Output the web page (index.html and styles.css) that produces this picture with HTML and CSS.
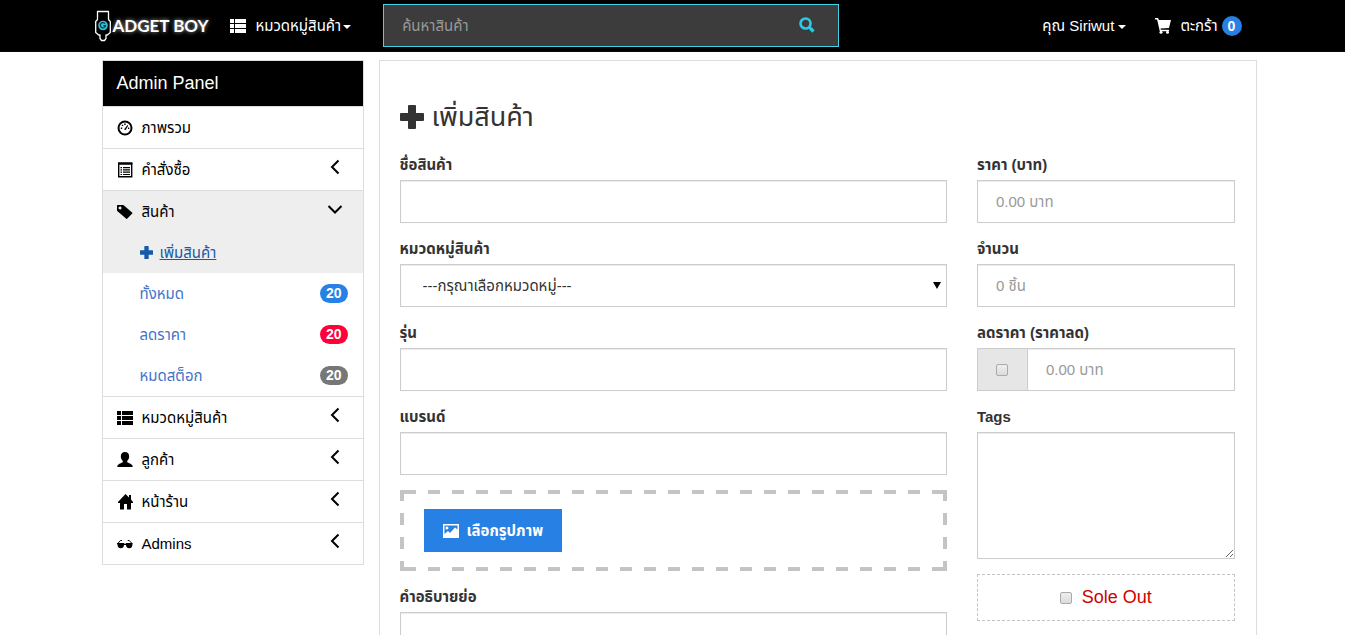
FILE: index.html
```html
<!DOCTYPE html>
<html lang="th">
<head>
<meta charset="utf-8">
<meta name="viewport" content="width=device-width, initial-scale=1">
<title>เพิ่มสินค้า - Gadget Boy</title>
<link rel="stylesheet" href="styles.css">
</head>
<body>
<svg class="sprite" aria-hidden="true">
  <symbol id="list" viewBox="0 0 16 14"><path d="M0 0h4v4H0zM5 0h11v4H5zM0 5h4v4H0zM5 5h11v4H5zM0 10h4v4H0zM5 10h11v4H5z"/></symbol>
  <symbol id="plus" viewBox="0 0 24 24"><path d="M9 0h6q1 0 1 1v7h7q1 0 1 1v6q0 1-1 1h-7v7q0 1-1 1H9q-1 0-1-1v-7H1q-1 0-1-1V9q0-1 1-1h7V1q0-1 1-1z"/></symbol>
  <symbol id="left" viewBox="0 0 16 16"><path d="M11.500 1.500L5 8l6.500 6.500" fill="none" stroke="currentColor" stroke-width="2"/></symbol>
  <symbol id="down" viewBox="0 0 16 16"><path d="M1.500 5L8 11.500 14.500 5" fill="none" stroke="currentColor" stroke-width="2"/></symbol>
</svg>

<header class="navbar">
  <div class="container navbar-inner">
    <a class="brand" href="#" aria-label="Gadget Boy">
      <svg class="brand-mark" viewBox="0 0 18 32" aria-hidden="true">
        <path d="M3.500 1.500h11v8l1.800 2v11l-3 2.500h-1.300v3.500l-1.500 2h-3l-1.500-2V25H4.700l-3-2.500v-11l1.800-2z" fill="#000" stroke="#fff" stroke-width="1.300" stroke-linejoin="round"/>
        <circle cx="9" cy="15.500" r="4.800" fill="#2fc0d8"/>
        <path d="M11 13.700a2.600 2.600 0 1 0 .5 2H9.300" fill="none" stroke="#0b3a44" stroke-width="1.200"/>
      </svg>
      <span class="brand-text">ADGET BOY</span>
    </a>
    <button class="nav-item nav-category" type="button">
      <svg class="icon-list"><use href="#list"/></svg>
      <span>หมวดหมู่สินค้า<i class="caret"></i></span>
    </button>
    <form class="search">
      <input class="search-input" type="text" placeholder="ค้นหาสินค้า" aria-label="ค้นหาสินค้า">
      <button class="search-button" type="button" aria-label="ค้นหา">
        <svg class="icon" viewBox="0 0 16 16"><circle cx="6.500" cy="6.500" r="5" fill="none" stroke="currentColor" stroke-width="2.600"/><path d="M10.200 10.200l4.300 4.300" fill="none" stroke="currentColor" stroke-width="3.200"/></svg>
      </button>
    </form>
    <button class="nav-item nav-user" type="button"><span>คุณ Siriwut <i class="caret"></i></span></button>
    <a class="nav-item" href="#">
      <svg class="icon" viewBox="0 0 16 16"><path d="M0 0h3l1 2h12l-2 8-8.500.5.400 1.200H14v1.500H4.800L2.100 1.500H0z"/><circle cx="6" cy="14.300" r="1.500"/><circle cx="12.500" cy="14.300" r="1.500"/></svg>
      <span>ตะกร้า</span>
      <span class="badge badge-cart">0</span>
    </a>
  </div>
</header>

<div class="container layout">
  <nav class="sidebar" aria-label="Admin Panel">
    <div class="sidebar-title">Admin Panel</div>
    <a class="side-link" href="#">
      <svg class="icon" viewBox="0 0 16 16"><circle cx="8" cy="8" r="6.500" fill="none" stroke="currentColor" stroke-width="2"/><path d="M7 9.500L10.500 5l.8.600L8.700 10z"/><path d="M3.800 7.500h1.400v1.400H3.800zM4.800 4.800h1.400v1.300H4.800zM7.200 3.600h1.500V5H7.200zM11 7.500h1.300v1.400H11z"/></svg>
      <span>ภาพรวม</span>
    </a>
    <a class="side-link" href="#">
      <svg class="icon" viewBox="0 0 16 16"><path d="M1.700 1.200h13v13.600h-13z" fill="none" stroke="currentColor" stroke-width="1.400"/><path d="M1 0.500h14.400v2.300H1zM3.500 5H5v1.200H3.500zM6 5h7v1.200H6zM3.500 7.300H5v1.200H3.500zM6 7.300h7v1.200H6zM3.500 9.600H5v1.200H3.500zM6 9.600h7v1.200H6zM3.500 11.900H5v1.200H3.500zM6 11.900h7v1.200H6z"/></svg>
      <span>คำสั่งซื้อ</span>
      <svg class="icon chevron"><use href="#left"/></svg>
    </a>
    <a class="side-link active" href="#">
      <svg class="icon" viewBox="0 0 16 16"><path fill-rule="evenodd" d="M0 1.500Q0 1 .5 1H6q.6 0 1 .4l8.300 7.300q.4.400 0 .8l-5.200 5.200q-.4.400-.8 0L.5 7.200Q0 6.800 0 6.200zM3 2.500a1.500 1.500 0 1 0 .01 3A1.500 1.500 0 0 0 3 2.500z"/></svg>
      <span>สินค้า</span>
      <svg class="icon chevron"><use href="#down"/></svg>
    </a>
    <div class="submenu">
      <a class="sub-link current" href="#"><svg class="icon-plus-small"><use href="#plus"/></svg><span>เพิ่มสินค้า</span></a>
      <a class="sub-link" href="#"><span>ทั้งหมด</span><span class="badge badge-blue">20</span></a>
      <a class="sub-link" href="#"><span>ลดราคา</span><span class="badge badge-red">20</span></a>
      <a class="sub-link" href="#"><span>หมดสต็อก</span><span class="badge">20</span></a>
    </div>
    <a class="side-link" href="#">
      <svg class="icon-list"><use href="#list"/></svg>
      <span>หมวดหมู่สินค้า</span>
      <svg class="icon chevron"><use href="#left"/></svg>
    </a>
    <a class="side-link" href="#">
      <svg class="icon" viewBox="0 0 16 16"><path d="M8 0c2.700 0 4.200 1.700 4.200 4.300 0 1.900-.8 3.600-2 4.700v1.300c1.800 1 5.500 1.700 5.500 4.700H.3c0-3 3.700-3.700 5.500-4.700V9c-1.200-1.100-2-2.800-2-4.700C3.800 1.700 5.300 0 8 0z"/></svg>
      <span>ลูกค้า</span>
      <svg class="icon chevron"><use href="#left"/></svg>
    </a>
    <a class="side-link" href="#">
      <svg class="icon" viewBox="0 0 16 16"><path d="M8.500 0L12 3.500V1h2v4.500L16 8v1h-2v6.500h-4V10H7v5.500H3V9H1V8z"/></svg>
      <span>หน้าร้าน</span>
      <svg class="icon chevron"><use href="#left"/></svg>
    </a>
    <a class="side-link" href="#">
      <svg class="icon" viewBox="0 0 16 16"><path d="M0 7h6.500q.6 0 .9.700h1.200q.3-.7.900-.7H15.500v1q0 4.200-3.200 4.200-3 0-3.300-3.200H7q-.3 3.200-3.300 3.200Q.5 12.200.5 8.500L0 8z"/><path d="M.7 7.500L3.500 4.500H5M15 7.500l-2.800-3H10.700" fill="none" stroke="currentColor"/></svg>
      <span>Admins</span>
      <svg class="icon chevron"><use href="#left"/></svg>
    </a>
  </nav>

  <main class="panel">
    <h1 class="title"><svg class="icon-plus"><use href="#plus"/></svg><span>เพิ่มสินค้า</span></h1>
    <form class="form">
      <div class="column">
        <div class="field"><label for="name">ชื่อสินค้า</label><input class="control" id="name" type="text"></div>
        <div class="field">
          <label for="category">หมวดหมู่สินค้า</label>
          <div class="select-wrap">
            <select class="control" id="category"><option>---กรุณาเลือกหมวดหมู่---</option></select>
          </div>
        </div>
        <div class="field"><label for="model">รุ่น</label><input class="control" id="model" type="text"></div>
        <div class="field"><label for="brand">แบรนด์</label><input class="control" id="brand" type="text"></div>
        <div class="dropzone">
          <button class="upload" type="button">
            <svg class="icon" viewBox="0 0 16 16"><path fill-rule="evenodd" d="M0 1h16v14H0zM1.500 2.500V11L5 8l2 2 5-5.500 2.500 2V2.500zM4 3.500a1.500 1.500 0 1 1-.01 3A1.500 1.500 0 0 1 4 3.500z"/></svg>
            <span>เลือกรูปภาพ</span>
          </button>
        </div>
        <div class="field"><label for="summary">คำอธิบายย่อ</label><textarea class="control area" id="summary"></textarea></div>
      </div>
      <div class="column">
        <div class="field"><label for="price">ราคา (บาท)</label><input class="control" id="price" type="text" placeholder="0.00 บาท"></div>
        <div class="field"><label for="amount">จำนวน</label><input class="control" id="amount" type="text" placeholder="0 ชิ้น"></div>
        <div class="field">
          <label for="sale">ลดราคา (ราคาลด)</label>
          <div class="input-group">
            <span class="addon"><input class="check" type="checkbox" aria-label="ลดราคา"></span>
            <input class="control" id="sale" type="text" placeholder="0.00 บาท">
          </div>
        </div>
        <div class="field"><label for="tags">Tags</label><textarea class="control area" id="tags"></textarea></div>
        <label class="soldout"><input class="check" type="checkbox"><span>Sole Out</span></label>
      </div>
    </form>
  </main>
</div>
</body>
</html>
```
FILE: styles.css
```css
* { box-sizing: border-box; }

body {
  margin: 0;
  background: #fff;
  color: #333;
  font: 15px/21px "Liberation Sans", Arial, "Noto Sans Thai", sans-serif;
}

a { color: inherit; text-decoration: none; }

button, input, select, textarea { font: inherit; color: inherit; }

button { border: 0; padding: 0; background: none; cursor: pointer; }

.sprite { position: absolute; width: 0; height: 0; }

.icon, .icon-list { flex: none; width: 16px; height: 16px; fill: currentColor; }
.icon-list { height: 14px; }

.container { max-width: 1170px; margin: 0 auto; }

/* Top bar */
.navbar { border-bottom: 1px solid #080808; background: #000; color: #fff; }

.navbar-inner {
  display: flex;
  align-items: center;
  min-height: 51px;
  padding: 0 16px 0 6px;
}

.brand { display: flex; align-items: center; gap: 1px; margin-right: 22px; }
.brand-mark { width: 18px; height: 32px; }
.brand-text {
  font: bold 17px/32px Lato, sans-serif;
  text-shadow: 0 0 4px #aaa;
  white-space: nowrap;
}

.nav-item { display: flex; align-items: center; gap: 9px; white-space: nowrap; }
.nav-category { margin-right: 32px; }

.caret {
  display: inline-block;
  vertical-align: middle;
  border: 4px solid transparent;
  border-top-color: currentColor;
  border-bottom: 0;
}
.nav-category .caret { margin-left: 2px; }
.nav-user { margin: 0 29px 0 auto; }

.search {
  display: flex;
  flex: 0 1 456px;
  height: 43px;
  border: 1px solid #44d2e8;
  background: #3c3c3c;
}
.search-input {
  flex: 1;
  min-width: 0;
  padding: 0 18px;
  border: 0;
  outline: 0;
  background: none;
}
.search-button { padding: 0 23px; color: #2fc8e8; line-height: 1; }

::placeholder { color: #999; opacity: 1; }

.badge {
  min-width: 20px;
  padding: 0 6px;
  border-radius: 10px;
  background: #777;
  color: #fff;
  font: bold 14px/19px "Liberation Sans", Arial, sans-serif;
  text-align: center;
}
.badge-blue, .badge-cart { background: #2780e3; }
.badge-red { background: #ff0039; }
.badge-cart { margin-left: -5px; line-height: 20px; }

/* Page */
.layout { display: flex; align-items: flex-start; gap: 15px; padding: 8px 1px 20px 14px; }

.sidebar { flex: 0 0 262px; border: 1px solid #ddd; color: #000; }
.sidebar-title {
  padding: 12px 14px;
  background: #000;
  color: #fff;
  font-size: 18px;
}
.side-link {
  display: flex;
  align-items: center;
  gap: 9px;
  height: 42px;
  padding: 0 20px 0 14px;
  border-top: 1px solid #ddd;
}
.chevron { margin: 0 0 6px auto; }
.active, .current { background: #eee; }

.sub-link {
  display: flex;
  align-items: center;
  justify-content: space-between;
  height: 41px;
  padding: 0 15px 0 37px;
  color: #4374c9;
}
.current { justify-content: flex-start; gap: 7px; color: #165ba8; }
.current span { text-decoration: underline; }
.icon-plus-small { width: 13px; height: 13px; fill: currentColor; }

.panel { flex: 1; min-width: 0; padding: 40px 21px 20px 20px; border: 1px solid #ddd; }
.title {
  display: flex;
  align-items: center;
  gap: 8px;
  margin: 0 0 21px;
  font-size: 27px;
  font-weight: normal;
  line-height: 32px;
}
.icon-plus { width: 24px; height: 24px; fill: currentColor; }

.form { display: grid; grid-template-columns: 17fr 8fr; column-gap: 30px; }
.column { display: flex; flex-direction: column; gap: 15px; min-width: 0; }
.field { display: flex; flex-direction: column; gap: 5px; }
.field label { height: 21px; font-weight: bold; }

.control {
  width: 100%;
  height: 43px;
  padding: 10px 18px;
  border: 1px solid #ccc;
  border-radius: 0;
  background: #fff;
  box-shadow: inset 0 1px 1px rgba(0, 0, 0, 0.08);
}
.area { display: block; height: 127px; resize: vertical; }

.select-wrap { position: relative; }
.select-wrap select { appearance: none; padding: 0 22px; }
.select-wrap::after {
  content: "";
  position: absolute;
  top: 18px;
  right: 6px;
  border: 4px solid transparent;
  border-top: 7px solid #000;
  border-bottom: 0;
  pointer-events: none;
}

.dropzone {
  --across: repeating-linear-gradient(90deg, transparent 0 4px, #c4c4c4 4px 16px, transparent 16px 24px);
  --along: repeating-linear-gradient(#c4c4c4 0 11px, transparent 11px 23px, #c4c4c4 23px 24px);
  padding: 19px 24px;
  background:
    var(--across) top / 100% 4px no-repeat,
    var(--across) bottom / 100% 4px no-repeat,
    var(--along) left / 4px 100% no-repeat,
    var(--along) right / 4px 100% no-repeat;
}
.upload {
  display: flex;
  align-items: center;
  gap: 8px;
  height: 43px;
  padding: 0 19px;
  background: #2780e3;
  color: #fff;
  font-weight: bold;
}

.input-group { display: flex; }
.input-group .control { flex: 1; min-width: 0; }
.addon {
  display: grid;
  place-items: center;
  width: 50px;
  border: 1px solid #ccc;
  border-right: 0;
  background: #e6e6e6;
}

.check {
  appearance: none;
  width: 12px;
  height: 12px;
  margin: 0;
  border: 1px solid #aaa;
  border-radius: 2px;
  background: linear-gradient(#eee, #dcdcdc);
}

.soldout {
  display: flex;
  align-items: center;
  justify-content: center;
  gap: 10px;
  height: 47px;
  border: 1px dashed #c4c4c4;
  color: #d00000;
  font-size: 18px;
}
```
